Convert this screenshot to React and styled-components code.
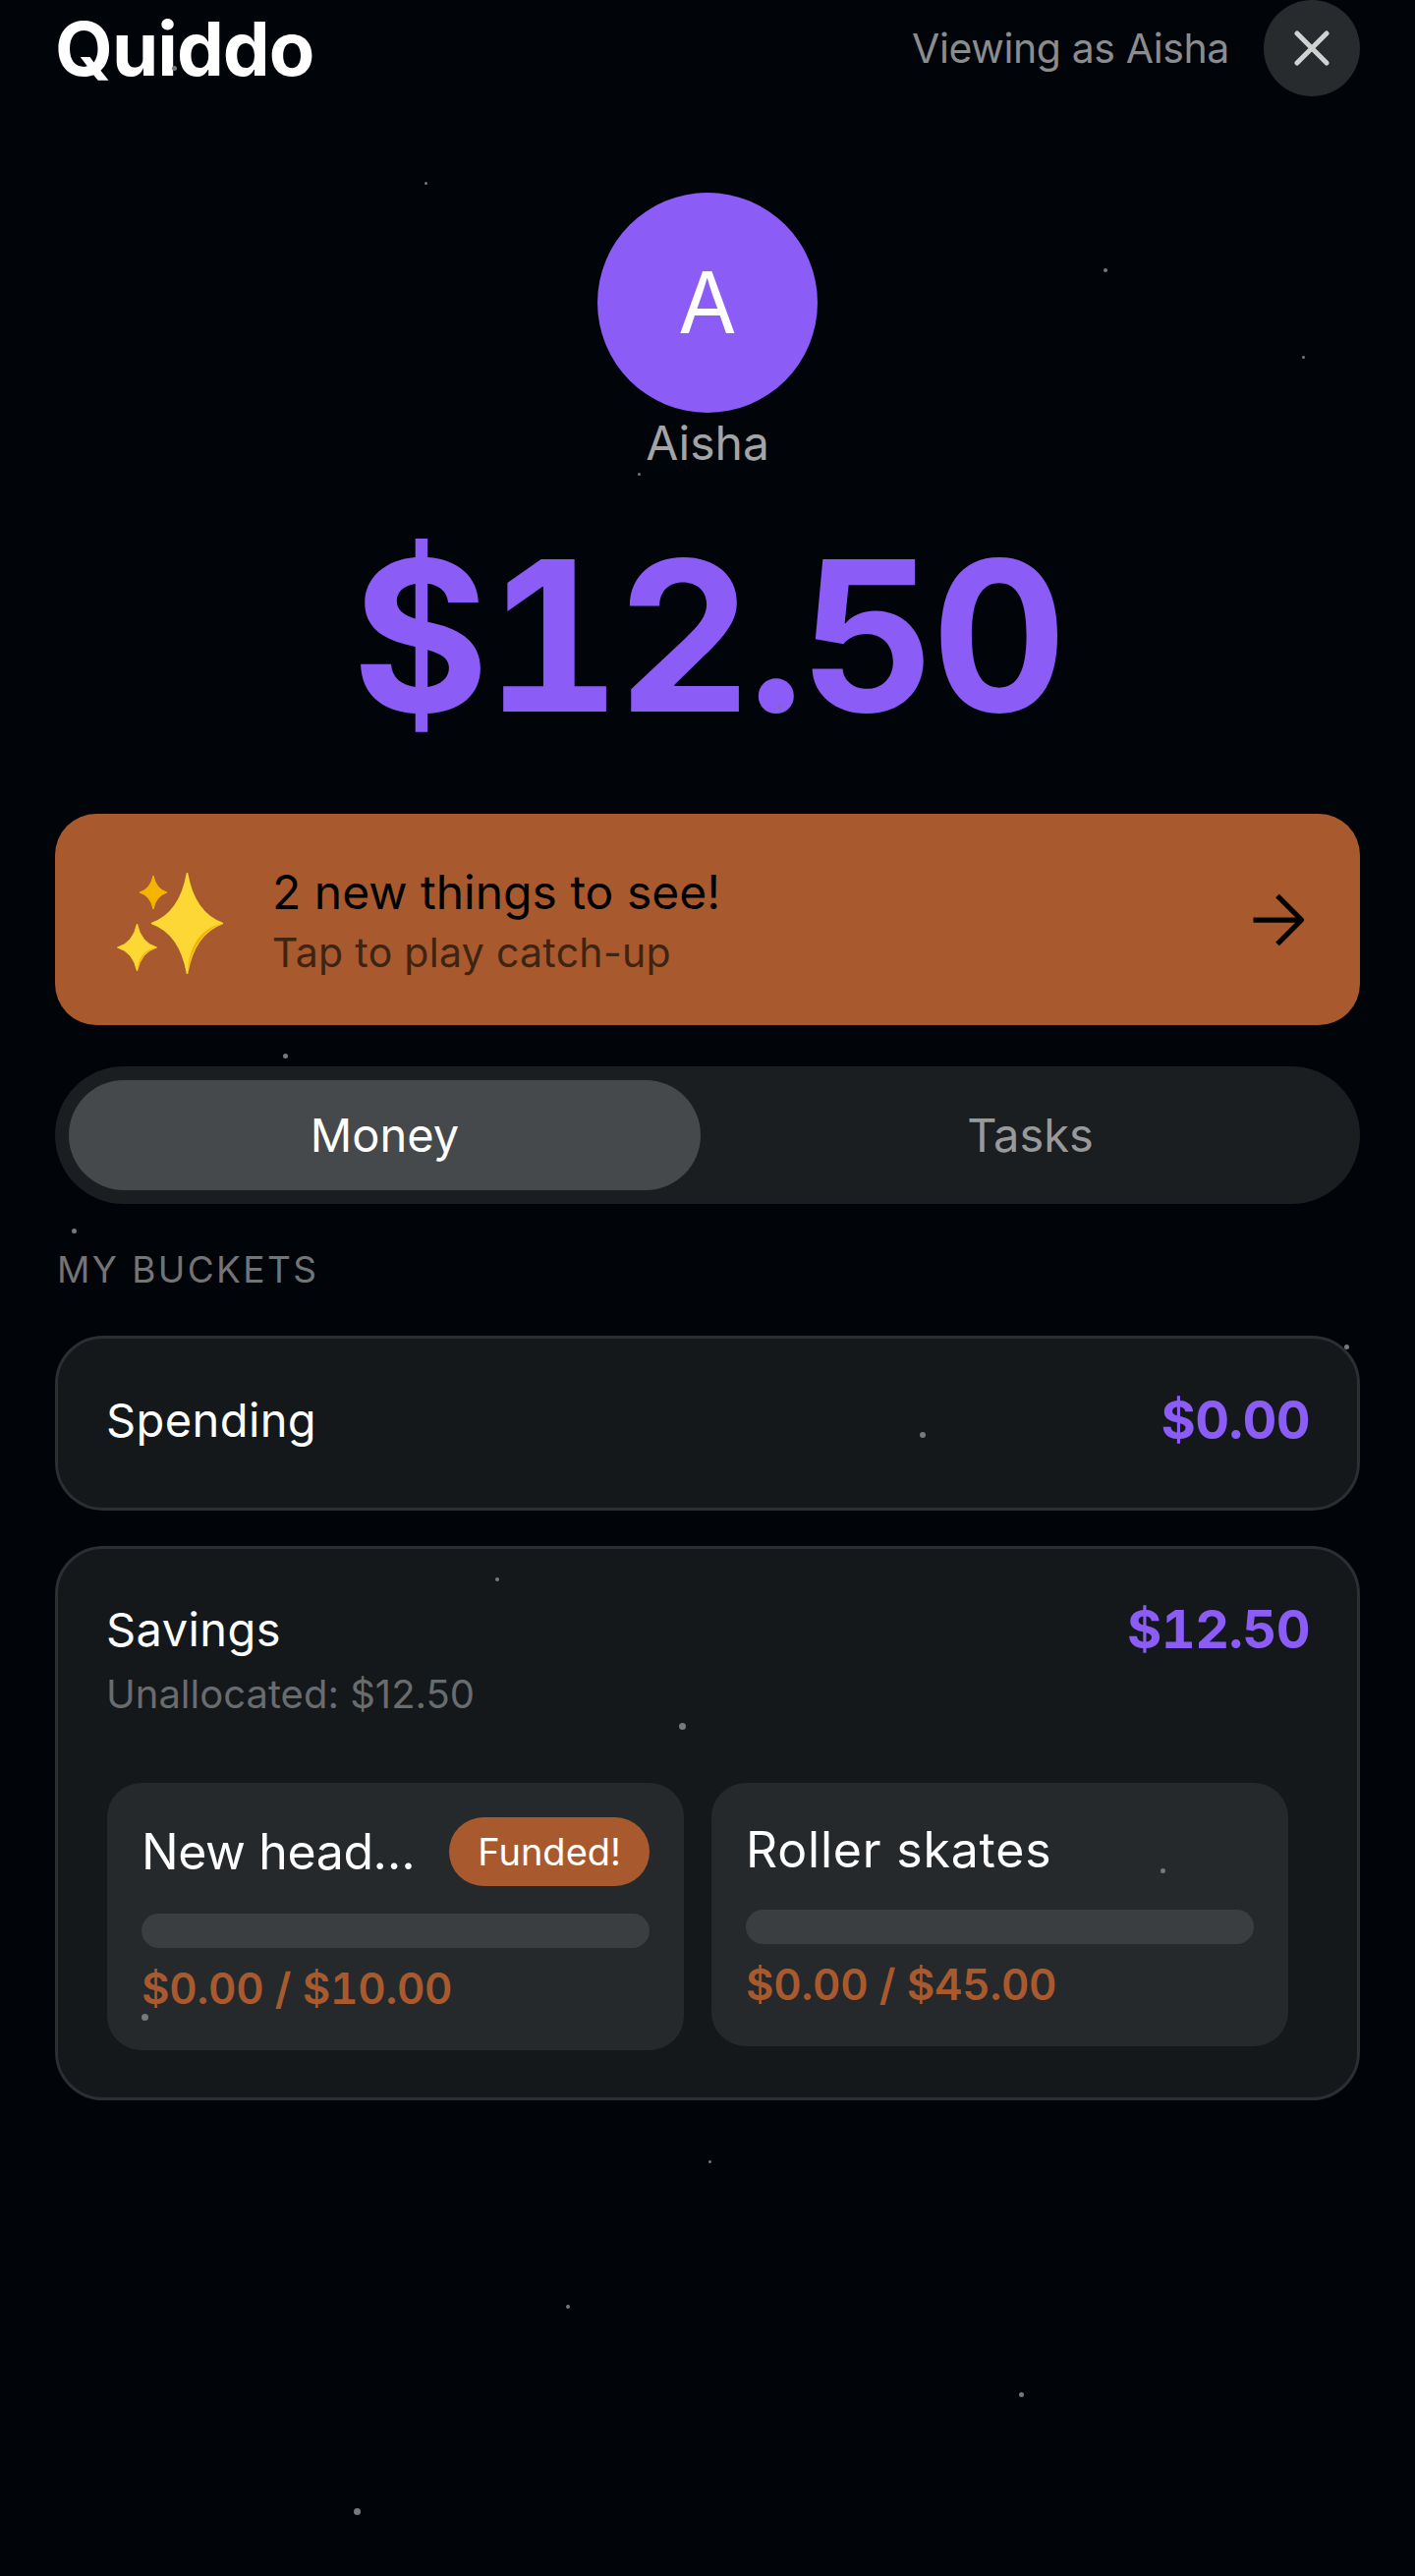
import React from 'react';
import styled, { createGlobalStyle } from 'styled-components';
import { ArrowRight } from 'lucide-react';

const FONT = `'Inter', 'Noto Sans', sans-serif`;
const PURPLE = '#8b5cf6';
const RUST = '#a85a2e';

const GlobalStyle = createGlobalStyle`
  html, body { margin: 0; padding: 0; background: #010409; }
  * { box-sizing: border-box; }
`;

const Page = styled.div`
  position: relative;
  width: 1440px;
  height: 2621px;
  overflow: hidden;
  background: #010409;
  color: #fff;
  font-family: ${FONT};
  padding: 0 56px;
`;

const Header = styled.header`
  display: flex;
  align-items: center;
  justify-content: space-between;
  height: 98px;
`;

const Logo = styled.div`
  font-size: 76px;
  font-weight: 700;
  letter-spacing: -1px;
  line-height: 98px;
`;

const HeaderRight = styled.div`
  display: flex;
  align-items: center;
  gap: 35px;
`;

const ViewingAs = styled.span`
  font-size: 41px;
  letter-spacing: -0.4px;
  color: #8a8c8e;
`;

const CloseButton = styled.button`
  width: 98px;
  height: 98px;
  border: 0;
  padding: 0;
  border-radius: 50%;
  background: #272b2e;
  display: flex;
  align-items: center;
  justify-content: center;
`;

const Profile = styled.section`
  display: flex;
  flex-direction: column;
  align-items: center;
  padding-top: 98px;
`;

const Avatar = styled.div`
  width: 224px;
  height: 224px;
  border-radius: 50%;
  background: ${PURPLE};
  display: flex;
  align-items: center;
  justify-content: center;
  font-size: 86px;
  font-weight: 400;
`;

const ProfileName = styled.div`
  font-size: 48px;
  line-height: 62px;
  color: #a3a4a5;
`;

const Balance = styled.div`
  margin-top: 36px;
  font-size: 213px;
  line-height: 258px;
  font-weight: 700;
  font-variant-numeric: tabular-nums;
  letter-spacing: -4px;
  color: ${PURPLE};
`;

const Banner = styled.div`
  display: flex;
  align-items: center;
  height: 215px;
  margin-top: 52px;
  padding: 0 56px 0 63px;
  border-radius: 42px;
  background: ${RUST};
`;

const SparkleIcon = styled.svg`
  margin-top: 8px;
  flex-shrink: 0;
`;

const BannerText = styled.div`
  flex: 1;
  margin-left: 50px;
  color: #000;
`;

const BannerTitle = styled.div`
  font-size: 48px;
  line-height: 66px;
`;

const BannerSub = styled.div`
  font-size: 41px;
  line-height: 56px;
  letter-spacing: 0.3px;
  color: #3d2413;
`;

const BannerArrow = styled(ArrowRight)`
  margin-right: -14px;
  stroke-linecap: butt;
`;

const Tabs = styled.div`
  display: grid;
  grid-template-columns: 1fr 1fr;
  gap: 14px;
  height: 140px;
  margin-top: 42px;
  padding: 14px;
  border-radius: 70px;
  background: #1a1e21;
`;

const Tab = styled.div`
  display: flex;
  align-items: center;
  justify-content: center;
  border-radius: 56px;
  font-size: 47px;
  padding-bottom: 2px;
  background: ${(props) => (props.$active ? '#45494c' : 'transparent')};
  color: ${(props) => (props.$active ? '#fff' : '#98999b')};
`;

const SectionLabel = styled.div`
  margin: 42px 0 0 2px;
  font-size: 37px;
  line-height: 50px;
  letter-spacing: 2.4px;
  color: #727476;
`;

const Bucket = styled.div`
  margin-top: ${(props) => props.$top}px;
  padding: ${(props) => props.$pad};
  border: 3px solid #2b2f32;
  border-radius: 49px;
  background: #14181b;
`;

const BucketRow = styled.div`
  display: flex;
  align-items: ${(props) => (props.$center ? 'center' : 'flex-start')};
  justify-content: space-between;
`;

const BucketName = styled.div`
  font-size: 47px;
  line-height: 66px;
  letter-spacing: 0.4px;
`;

const BucketAmount = styled.div`
  font-size: 54px;
  line-height: 66px;
  font-weight: 700;
  font-variant-numeric: tabular-nums;
  letter-spacing: -0.6px;
  color: ${PURPLE};
`;

const Unallocated = styled.div`
  margin-top: 5px;
  font-size: 40px;
  line-height: 56px;
  color: #696c6e;
`;

const Goals = styled.div`
  display: grid;
  grid-template-columns: 587px 587px;
  gap: 28px;
  align-items: start;
  margin: 62px 0 0 1px;
`;

const Goal = styled.div`
  padding: 35px;
  border-radius: 35px;
  background: #25292c;
`;

const GoalHead = styled.div`
  display: flex;
  align-items: center;
  justify-content: space-between;
`;

const GoalName = styled.div`
  font-size: 50px;
  line-height: 66px;
  letter-spacing: ${(props) => (props.$tight ? '-0.4px' : '0.8px')};
  white-space: nowrap;
`;

const FundedBadge = styled.span`
  flex-shrink: 0;
  height: 70px;
  padding: 0 29px;
  border-radius: 35px;
  background: ${RUST};
  font-size: 38px;
  line-height: 70px;
`;

const Track = styled.div`
  height: 35px;
  margin-top: 28px;
  border-radius: 18px;
  background: #3a3e41;
`;

const GoalAmount = styled.div`
  margin-top: 13px;
  font-size: 44px;
  line-height: 56px;
  font-weight: 600;
  font-variant-numeric: tabular-nums;
  letter-spacing: -0.3px;
  color: ${RUST};
`;

const Star = styled.i`
  position: absolute;
  border-radius: 50%;
  background: #77797b;
  pointer-events: none;
`;

const stars = [
  [177, 69, 5], [433, 186, 3], [1125, 275, 4], [1326, 363, 3], [650, 482, 3], [793, 719, 3],
  [290, 1074, 5], [75, 1252, 5], [1370, 1370, 5], [939, 1460, 6], [506, 1607, 4],
  [694, 1756, 7], [147, 2052, 7], [1183, 1903, 5], [722, 2199, 3], [578, 2347, 4],
  [1039, 2436, 5], [363, 2555, 7],
];

// four point star, curves pulled in toward the centre
const sparkle = (x, y, w, h, k = 0.2) => {
  const cw = w * k;
  const ch = h * k;
  return `M${x} ${y - h}Q${x + cw} ${y - ch} ${x + w} ${y}Q${x + cw} ${y + ch} ${x} ${y + h}Q${x - cw} ${y + ch} ${x - w} ${y}Q${x - cw} ${y - ch} ${x} ${y - h}Z`;
};

const shade = (x, y, w, h) =>
  `M${x + w} ${y}Q${x + w * 0.2} ${y + h * 0.2} ${x} ${y + h}Q${x + w * 0.08} ${y + h * 0.14} ${x + w} ${y}Z`;

const Sparkles = () => (
  <SparkleIcon width="108" height="103" viewBox="0 0 108 103">
    <path d={sparkle(71.5, 51.5, 36, 51)} fill="#fdd835" stroke="#fdd835" strokeWidth="1.5" strokeLinejoin="round" />
    <path d={shade(71.5, 51.5, 36, 51)} fill="#f4b400" />
    <path d={sparkle(37, 20, 14, 17)} fill="#f4b400" stroke="#f4b400" strokeWidth="1" strokeLinejoin="round" />
    <path d={sparkle(20.5, 76, 20, 24)} fill="#fdd835" stroke="#fdd835" strokeWidth="1" strokeLinejoin="round" />
    <path d={shade(20.5, 76, 20, 24)} fill="#f4b400" />
  </SparkleIcon>
);

const CloseIcon = () => (
  <svg width="36" height="36" viewBox="0 0 36 36" fill="none" stroke="#d0d1d1" strokeWidth="5" strokeLinecap="round">
    <path d="M3 3 33 33M33 3 3 33" />
  </svg>
);

const App = () => (
  <Page>
    <GlobalStyle />
    <Header>
      <Logo>Quiddo</Logo>
      <HeaderRight>
        <ViewingAs>Viewing as Aisha</ViewingAs>
        <CloseButton><CloseIcon /></CloseButton>
      </HeaderRight>
    </Header>

    <Profile>
      <Avatar>A</Avatar>
      <ProfileName>Aisha</ProfileName>
      <Balance>$12.50</Balance>
    </Profile>

    <Banner>
      <Sparkles />
      <BannerText>
        <BannerTitle>2 new things to see!</BannerTitle>
        <BannerSub>Tap to play catch-up</BannerSub>
      </BannerText>
      <BannerArrow size={84} strokeWidth={1.5} color="#000" />
    </Banner>

    <Tabs>
      <Tab $active>Money</Tab>
      <Tab>Tasks</Tab>
    </Tabs>

    <SectionLabel>MY BUCKETS</SectionLabel>

    <Bucket $top={42} $pad="50px 48px 56px 49px">
      <BucketRow $center>
        <BucketName>Spending</BucketName>
        <BucketAmount>$0.00</BucketAmount>
      </BucketRow>
    </Bucket>

    <Bucket $top={36} $pad="49px 48px 48px 49px">
      <BucketRow>
        <div>
          <BucketName>Savings</BucketName>
          <Unallocated>Unallocated: $12.50</Unallocated>
        </div>
        <BucketAmount>$12.50</BucketAmount>
      </BucketRow>
      <Goals>
        <Goal>
          <GoalHead>
            <GoalName $tight>New head…</GoalName>
            <FundedBadge>Funded!</FundedBadge>
          </GoalHead>
          <Track />
          <GoalAmount>$0.00 / $10.00</GoalAmount>
        </Goal>
        <Goal>
          <GoalHead>
            <GoalName>Roller skates</GoalName>
          </GoalHead>
          <Track />
          <GoalAmount>$0.00 / $45.00</GoalAmount>
        </Goal>
      </Goals>
    </Bucket>

    {stars.map(([x, y, d]) => (
      <Star key={`${x}-${y}`} style={{ left: x - d / 2, top: y - d / 2, width: d, height: d }} />
    ))}
  </Page>
);

export default App;
